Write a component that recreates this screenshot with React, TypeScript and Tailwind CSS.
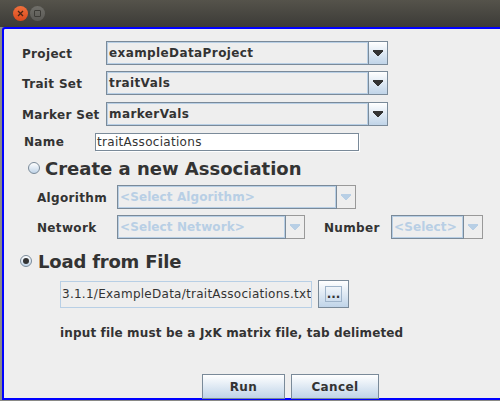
const FONT = "font-['DejaVu_Sans',sans-serif]";
const LABEL = "whitespace-nowrap pt-[1px] text-[12px] font-bold tracking-[0.33px]";

function Arrow({ off }: { off?: boolean }) {
  return (
    <svg width="10" height="6" viewBox="0 0 10 6" shapeRendering="crispEdges">
      <path d="M0 0h10v2H9v1H8v1H7v1H6v1H4V5H3V4H2V3H1V2H0z" fill={off ? "#b8cfe5" : "#333333"} />
    </svg>
  );
}

function Combo({ text, className }: { text: string; className: string }) {
  return (
    <div className={`flex h-[24px] border border-[#7a8a99] ${className}`}>
      <div className="flex-1 overflow-hidden whitespace-nowrap border border-[#b8cfe5] pl-[1px] text-[12px] font-bold leading-[20px] tracking-[0.4px] text-[#333333]">
        {text}
      </div>
      <div className="flex w-[19px] items-center justify-center border-l border-[#7a8a99] bg-gradient-to-b from-white to-[#c0d4e8]">
        <Arrow />
      </div>
    </div>
  );
}

function OffCombo({ text, className }: { text: string; className: string }) {
  return (
    <div className={`flex h-[24px] ${className}`}>
      <div className="flex-1 overflow-hidden whitespace-nowrap border border-[#7a8a99] pl-[2px] text-[12px] font-bold leading-[22px] tracking-[0.1px] text-[#b8cfe5] shadow-[inset_0_0_0_1px_#b8cfe5]">
        {text}
      </div>
      <div className="flex w-[19px] items-center justify-center border border-l-0 border-[#999999]">
        <Arrow off />
      </div>
    </div>
  );
}

function Btn({ label, className }: { label: string; className: string }) {
  return (
    <div className={`flex h-[25px] items-center justify-center border border-[#7a8a99] bg-gradient-to-b from-white to-[#c0d4e8] text-[12px] font-bold tracking-[0.4px] text-[#333333] ${className}`}>
      {label}
    </div>
  );
}

export default function App() {
  return (
    <div className={`flex h-[401px] w-[500px] flex-col overflow-hidden bg-[#8a8a86] ${FONT}`}>
      <div className="flex h-[27px] shrink-0 items-center gap-[1px] bg-gradient-to-b from-[#55534b] to-[#3c3b37] pl-[13px]">
        <div className="flex h-[15px] w-[15px] items-center justify-center rounded-full bg-gradient-to-b from-[#f0703c] to-[#d8481c]">
          <svg width="7" height="7" viewBox="0 0 7 7"><path d="M1 1l5 5M6 1L1 6" stroke="#4a2414" strokeWidth="1.3" /></svg>
        </div>
        <div className="ml-[1px] flex h-[15px] w-[15px] items-center justify-center rounded-full bg-gradient-to-b from-[#706f6a] to-[#5a5955]">
          <div className="h-[7px] w-[7px] rounded-[1px] border border-[#3c3b37]" />
        </div>
      </div>
      <div className="ml-[2px] h-[373px] shrink-0 rounded-tl-[3px] border-y-2 border-l-2 border-[#0000ff] bg-[#eeeeee] text-[#333333]">
        <div className="mt-[12px] flex items-center">
          <span className={`ml-[18px] w-[84px] ${LABEL}`}>Project</span>
          <Combo text="exampleDataProject" className="w-[282px]" />
        </div>
        <div className="mt-[6px] flex items-center">
          <span className={`ml-[18px] w-[84px] ${LABEL}`}>Trait Set</span>
          <Combo text="traitVals" className="w-[282px]" />
        </div>
        <div className="mt-[7px] flex items-center">
          <span className={`ml-[18px] w-[84px] ${LABEL}`}>Marker Set</span>
          <Combo text="markerVals" className="w-[282px]" />
        </div>
        <div className="mt-[6px] flex items-center">
          <span className={`ml-[20px] w-[71px] ${LABEL}`}>Name</span>
          <div className="h-[18px] w-[264px] border border-[#7a8a99] bg-white pl-[1px] text-[12px] leading-[16px] tracking-[0.3px] shadow-[1px_1px_0_#ffffff]">
            traitAssociations
          </div>
        </div>

        <div className="mt-[6px] flex h-[22px] items-center">
          <div className="ml-[24px] h-[12px] w-[12px] rounded-full border border-[#7a8a99] bg-gradient-to-b from-white to-[#c0d4e8]" />
          <span className="ml-[5px] whitespace-nowrap text-[18px] font-bold">Create a new Association</span>
        </div>
        <div className="mt-[6px] flex items-center">
          <span className={`ml-[33px] w-[80px] ${LABEL}`}>Algorithm</span>
          <OffCombo text="<Select Algorithm>" className="w-[239px]" />
        </div>
        <div className="mt-[6px] flex items-center">
          <span className={`ml-[33px] w-[80px] ${LABEL}`}>Network</span>
          <OffCombo text="<Select Network>" className="w-[188px]" />
          <span className={`ml-[19px] w-[67px] ${LABEL}`}>Number</span>
          <OffCombo text="<Select>" className="w-[92px]" />
        </div>

        <div className="mt-[11px] flex h-[22px] items-center">
          <div className="ml-[16px] flex h-[12px] w-[12px] items-center justify-center rounded-full border border-[#7a8a99] bg-gradient-to-b from-white to-[#c0d4e8]">
            <div className="h-[6px] w-[6px] rounded-full bg-[#333333]" />
          </div>
          <span className="ml-[6px] whitespace-nowrap text-[18px] font-bold tracking-[-0.2px]">Load from File</span>
        </div>
        <div className="mt-[8px] flex items-center">
          <div className="ml-[56px] flex h-[27px] w-[252px] items-center overflow-hidden whitespace-nowrap border border-[#b8cfe5] pl-[1px] text-[12px] tracking-[0.26px]">
            3.1.1/ExampleData/traitAssociations.txt
          </div>
          <div className="ml-[6px] flex h-[28px] w-[31px] items-center justify-center border border-[#7a8a99] bg-gradient-to-b from-white to-[#c0d4e8]">
            <div className="flex h-[16px] w-[17px] items-end justify-center border border-[#9fb4ca] text-[12px] font-bold leading-[14px]">...</div>
          </div>
        </div>
        <div className="ml-[56px] mt-[17px] whitespace-nowrap text-[12px] font-bold leading-[17px] tracking-[0.15px]">
          input file must be a JxK matrix file, tab delimeted
        </div>
        <div className="ml-[198px] mt-[32px] flex gap-[6px]">
          <Btn label="Run" className="w-[83px]" />
          <Btn label="Cancel" className="w-[88px]" />
        </div>
      </div>
    </div>
  );
}
